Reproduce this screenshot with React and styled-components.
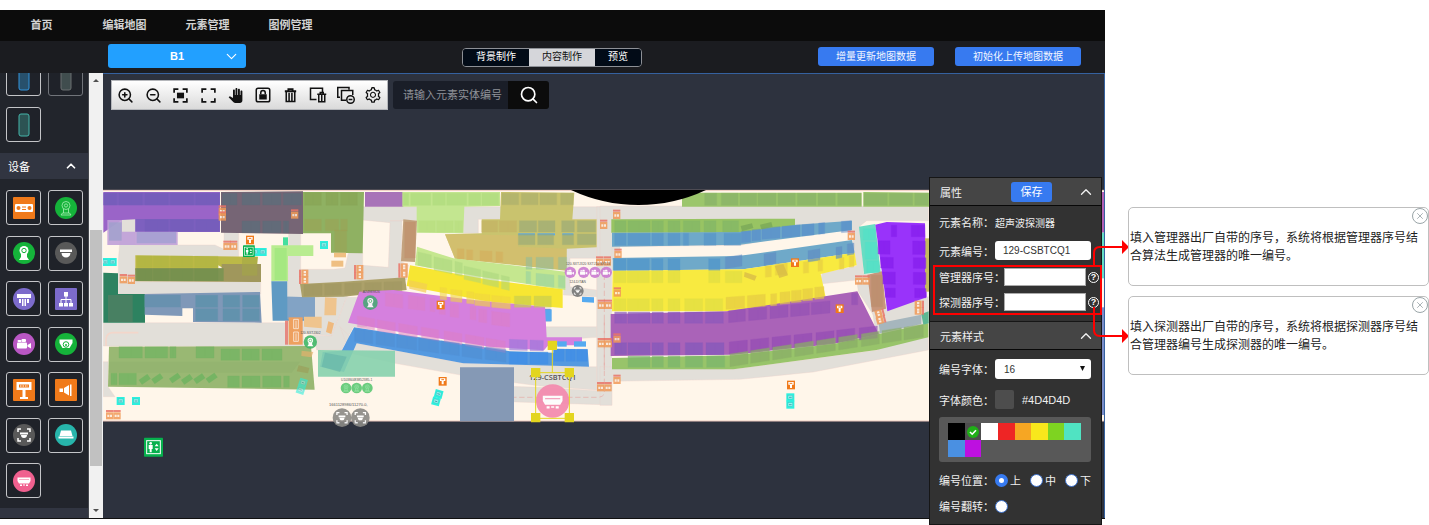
import React from 'react';
import styled, { createGlobalStyle } from 'styled-components';
import { ZoomIn, ZoomOut, Search, ChevronUp, ChevronDown, X } from 'lucide-react';
import { AiOutlineSetting } from 'react-icons/ai';
import { MdPanTool } from 'react-icons/md';

const Global = createGlobalStyle`
  * { box-sizing: border-box; }
  body { margin: 0; background: #fff; font-family: "Liberation Sans", "Noto Sans CJK SC", sans-serif; }
  button, input, select { font-family: inherit; margin: 0; }
  button { cursor: pointer; border: 0; padding: 0; }
`;

const Page = styled.div`
  display: flex;
  height: 100vh;
  padding: 10px 0 6px;
`;
const Workbench = styled.main`
  position: relative;
  flex: 1;
  min-width: 0;
  display: flex;
  flex-direction: column;
  background: #22252c;
  border-bottom: 1px solid #111;
`;
const Nav = styled.nav`
  display: flex;
  flex: none;
  height: 31px;
  background: #0c0c0c;
`;
const NavLink = styled.a`
  width: 83px;
  line-height: 30px;
  text-align: center;
  font-size: 11px;
  font-weight: 700;
  color: #d2d2d2;
  text-decoration: none;
`;
const SubBar = styled.div`
  display: grid;
  grid-template-columns: 1fr auto 1fr;
  align-items: center;
  flex: none;
  height: 32px;
  padding: 0 24px 0 108px;
  background: #1b1c20;
`;
const FloorPicker = styled.label`
  position: relative;
  width: 138px;
  margin-bottom: 2px;
  color: #fff;
  svg { position: absolute; right: 6px; top: 4px; pointer-events: none; }
`;
const FloorSelect = styled.select`
  appearance: none;
  display: block;
  width: 100%;
  height: 24px;
  border: 0;
  border-radius: 3px;
  background: #22a0ff;
  color: #fff;
  font-size: 11px;
  font-weight: 700;
  text-align-last: center;
`;
const Segments = styled.div`
  display: flex;
  height: 19px;
  margin-left: -85px;
  border: 1px solid #8d9096;
  border-radius: 4px;
  overflow: hidden;
`;
const Segment = styled.button`
  padding: 0 13px;
  font-size: 10px;
  line-height: 16px;
  background: ${p => (p.$active ? '#d5d6da' : '#020b17')};
  color: ${p => (p.$active ? '#111' : '#fff')};
`;
const Actions = styled.div`
  display: flex;
  justify-content: flex-end;
  gap: 21px;
  padding-bottom: 1px;
`;
const ActionButton = styled.button`
  height: 19px;
  padding: 0 18px;
  border-radius: 3px;
  background: #377af0;
  color: #f2f6ff;
  font-size: 10px;
  line-height: 18px;
  white-space: nowrap;
`;
const Body = styled.div`
  flex: 1;
  min-height: 0;
  display: flex;
`;
const Sidebar = styled.aside`
  width: 88px;
  overflow: hidden;
`;
const TileGrid = styled.div`
  display: grid;
  grid-template-columns: 35px 35px;
  grid-auto-rows: 35px;
  gap: 11px 7px;
  padding: 0 5px 0 6px;
  margin: -12px 0 11px;
`;
const DeviceGrid = styled(TileGrid)`
  row-gap: 0;
  height: 308px;
  align-content: space-between;
  margin: 11px 0 10px;
`;
const Tile = styled.button`
  display: grid;
  place-items: center;
  border: 1px solid ${p => (p.$dim ? '#71747a' : '#c4c5c8')};
  border-radius: 3px;
  background: #1f2229;
`;
const GroupHeader = styled.button`
  display: flex;
  align-items: center;
  justify-content: space-between;
  width: 100%;
  height: 26px;
  padding: 0 10px 0 8px;
  background: #313541;
  color: #fff;
  font-size: 11px;
`;
const Scrollbar = styled.div`
  width: 15px;
  display: flex;
  flex-direction: column;
  align-items: center;
  background: #f1f1f1;
  border-left: 1px solid #44474d;
`;
const ScrollArrow = styled.i`
  margin: 6px 0;
  border: 3px solid transparent;
  border-${p => (p.$up ? 'bottom' : 'top')}-color: #505050;
  border-${p => (p.$up ? 'top' : 'bottom')}-width: 0;
`;
const Track = styled.div`
  flex: 1;
  width: 12px;
  padding-top: 142px;
  padding-bottom: 37px;
`;
const Thumb = styled.div`
  height: 100%;
  background: #c1c1c1;
`;
const Canvas = styled.section`
  position: relative;
  flex: 1;
  min-width: 0;
  overflow: hidden;
  background: #2d323e;
  border: solid #35619f;
  border-width: 1px 1px 0 0;
`;
const MapSvg = styled.svg`
  display: block;
  width: 100%;
  height: 100%;
`;
const CanvasTools = styled.div`
  position: absolute;
  top: 6px;
  left: 8px;
  display: flex;
  align-items: center;
  gap: 5px;
`;
const Toolbar = styled.div`
  display: flex;
  width: 277px;
  height: 30px;
  border: 1px solid #b5b7bb;
  background: linear-gradient(#fff, #dadada);
`;
const ToolButton = styled.button`
  flex: 1;
  display: grid;
  place-items: center;
  background: none;
  color: #111;
`;
const SearchBox = styled.form`
  display: flex;
  height: 28px;
  border-radius: 3px;
  overflow: hidden;
`;
const SearchInput = styled.input`
  width: 115px;
  border: 0;
  padding: 0 0 0 10px;
  background: #1a1e28;
  color: #fff;
  font-size: 11px;
  &::placeholder { color: #8f9298; }
`;
const SearchButton = styled.button`
  width: 41px;
  display: grid;
  place-items: center;
  background: #0c0c0c;
  color: #fff;
`;
const Panel = styled.form`
  position: absolute;
  top: 167px;
  right: 3px;
  width: 173px;
  border: 1px solid #161616;
  background: #323232;
  color: #f0f0f0;
  font-size: 11px;
`;
const PanelHeader = styled.header`
  display: flex;
  align-items: center;
  justify-content: space-between;
  height: ${p => (p.$divided ? 29 : 28)}px;
  padding: 0 6px 0 10px;
  background: #454545;
  border-bottom: 1px solid #080808;
  border-top: ${p => (p.$divided ? '1px solid #161616' : '0')};
`;
const SaveButton = styled.button`
  width: 41px;
  height: 20px;
  margin-left: 24px;
  border-radius: 3px;
  background: #377af0;
  color: #fff;
  font-size: 11px;
  line-height: 18px;
`;
const Fields = styled.div`
  padding: 6px 0;
`;
const StyleFields = styled.div`
  display: flex;
  flex-direction: column;
  gap: 11px;
  padding: 9px 10px 10px 9px;
`;
const Row = styled.div`
  display: flex;
  align-items: center;
  height: ${p => p.$h || 20}px;
  padding: ${p => (p.$inset ? '0 10px 0 9px' : '0')};
  margin-bottom: ${p => p.$after || 0}px;
`;
const Label = styled.label`
  flex: none;
  width: ${p => (p.$wide ? 65 : 56)}px;
  white-space: nowrap;
`;
const Value = styled.output`
  padding-left: ${p => p.$gap || 0}px;
  font-size: ${p => (p.$gap ? 11 : 10)}px;
`;
const CodeInput = styled.input`
  flex: 1;
  min-width: 0;
  height: 19px;
  border: 0;
  border-radius: 3px;
  padding: 0 8px;
  background: #fff;
  color: #333;
  font-size: 10px;
`;
const Highlight = styled.div`
  height: 50px;
  margin: 0 -1px 0 3px;
  padding: 1px 1px 2px 4px;
  border: 2px solid #f00;
`;
const SerialInput = styled.input`
  flex: 1;
  min-width: 0;
  height: 18px;
  border: 1px solid #aaa;
  padding: 0 4px;
  background: #fff;
  font-size: 10px;
`;
const Help = styled.button`
  flex: none;
  width: 11px;
  height: 11px;
  margin-left: 2px;
  border: 1px solid #fff;
  border-radius: 50%;
  background: none;
  color: #fff;
  font-size: 9px;
  font-weight: 700;
  line-height: 9px;
`;
const SizePicker = styled.div`
  position: relative;
  flex: 1;
  svg { position: absolute; right: 6px; top: 7px; pointer-events: none; }
`;
const SizeSelect = styled.select`
  appearance: none;
  display: block;
  width: 100%;
  height: 20px;
  border: 0;
  border-radius: 3px;
  padding: 0 9px;
  background: #fff;
  color: #333;
  font-size: 10px;
`;
const ColorChip = styled.span`
  width: 19px;
  height: 19px;
  border-radius: 2px;
  background: #4d4d4d;
`;
const Palette = styled.div`
  display: grid;
  grid-template-columns: repeat(8, 1fr);
  grid-auto-rows: 17px;
  margin-top: -3px;
  padding: 6px 10px 5px 9px;
  border-radius: 3px;
  background: #585858;
`;
const Swatch = styled.button`
  display: grid;
  place-items: center;
  background: ${p => p.$color};
`;
const Choice = styled.label`
  display: flex;
  align-items: center;
  gap: 2px;
  width: 35px;
  flex: none;
`;
const Radio = styled.input`
  appearance: none;
  width: 13px;
  height: 13px;
  border-radius: 50%;
  border: 1px solid #3b6fc9;
  background: #fff;
  &:checked { background: #fff; border: 4px solid #377af0; }
`;
const Arrows = styled.svg`
  position: absolute;
  top: 62px;
  left: 160px;
  pointer-events: none;
`;
const Notes = styled.aside`
  flex: none;
  width: 324px;
  display: flex;
  flex-direction: column;
  gap: 10px;
  padding: 197px 0 0 23px;
`;
const Note = styled.article`
  position: relative;
  height: 79px;
  padding: 21px 1px 0;
  border: 1px solid #bfbfbf;
  border-radius: 5px;
  color: #222;
  font-size: 12px;
  line-height: 18px;
  p { margin: 0; }
`;
const CloseButton = styled.button`
  position: absolute;
  top: 0;
  right: 0;
  width: 16px;
  height: 16px;
  display: grid;
  place-items: center;
  border: 1px solid #9aa5a8;
  border-radius: 50%;
  background: #fff;
  color: #9aa5a8;
`;

/* ---------- toolbar drawings ---------- */
const Line = ({ children, w = 2, size = 18 }) => (
  <svg width={size} height={size} viewBox="0 0 24 24" fill="none" stroke="currentColor" strokeWidth={w}>{children}</svg>
);
const corners = 'M3 8V3h6M15 3h6v5M21 16v5h-6M9 21H3v-5';
const tools = [
  ['放大', <ZoomIn size={17} strokeWidth={2.2} />],
  ['缩小', <ZoomOut size={17} strokeWidth={2.2} />],
  ['适应', <Line w={2.4} size={17}><path d={corners} /><path d="M7 8h10v8H7z" fill="currentColor" stroke="none" /></Line>],
  ['全屏', <Line w={2.4} size={17}><path d={corners} /></Line>],
  ['拖动', <MdPanTool size={15} />],
  ['锁定', <Line><rect x="3" y="3" width="18" height="18" rx="2.5" /><path d="M7 11h10v7H7z" fill="currentColor" stroke="none" /><path d="M9 11V9a3 3 0 0 1 6 0v2" /></Line>],
  ['删除', <Line size={17}><path d="M4 6h16M9 5V3h6v2" strokeWidth="2.6" /><path d="M6 7v13.500h12V7M10 8v12M14 8v12" strokeWidth="2.200" /></Line>],
  ['删除区域', <Line><path d="M10 18H2V3h16v5" /><path d="M11 11h12M15 10V8.500h4V10" /><path d="M13 12v9h8v-9M17 12v9" /></Line>],
  ['移除图层', <Line><path d="M4 15H1V2h15v3" /><path d="M12 19H6V6h15v6" /><circle cx="18" cy="18" r="5" /><path d="M15.500 18h5" /></Line>],
  ['设置', <AiOutlineSetting size={18} />],
];

/* ---------- device tile drawings (22 x 22) ---------- */
const Glyph = ({ kind }) => {
  const W = '#fff';
  switch (kind) {
    case 'module': return <g fill={W}><rect x="2" y="7" width="18" height="8" rx="1" /><g fill="#f07a1a"><circle cx="5.500" cy="11" r="2" /><circle cx="16.500" cy="11" r="2" /><path d="M9 9.500h4v1H9zM9 12h4v1H9z" /></g></g>;
    case 'camLine': return <g fill="none" stroke="#a8f0b5" strokeWidth=".8"><circle cx="11" cy="8.500" r="4" /><circle cx="11" cy="8.500" r="1.600" /><path d="M8.500 12v4M13.500 12v4M6 18h10l-1.500-2h-7z" /></g>;
    case 'cam': return <g fill={W}><circle cx="11" cy="8.500" r="4.500" /><path d="M8 12h6v3l2 3H6l2-3z" /><circle cx="11" cy="8.500" r="2.200" fill="none" stroke="#15b33a" strokeWidth="1" /></g>;
    case 'dome': return <path fill={W} d="M5 7.500h12v2.500H5zM6.500 11h9a4.500 4.500 0 0 1-9 0z" />;
    case 'shower': return <path fill={W} d="M4 6h14v4H4zM6 11h2v4H6zM9 11h1.500v7H9zM11.500 11H13v7h-1.500zM14 11h2v4h-2z" />;
    case 'tree': return <g fill={W}><path d="M9 4h4v4.500H9zM4 15h4v3.500H4zM9 15h4v3.500H9zM14 15h4v3.500h-4z" /><path d="M11 8v7M6 15v-3.500h10V15" stroke={W} fill="none" /></g>;
    case 'video': return <g fill={W}><rect x="4" y="9.500" width="10" height="6" rx="1" /><path d="M14.500 12l3.500-2v5.500l-3.500-2z" /><rect x="4.500" y="7" width="4" height="2" rx="1" /><rect x="8.500" y="6" width="4.500" height="3" rx="1" /></g>;
    case 'speed': return <g fill={W}><path d="M4.500 6.500h13V10l-3 5h-7l-3-5z" /><circle cx="11" cy="11.500" r="2.800" fill="none" stroke="#15b33a" /><circle cx="11" cy="12" r="1" fill="#15b33a" /></g>;
    case 'sign': return <g fill={W}><path d="M3.500 3h15v8h-15z" /><path d="M9.500 11h3v7h-3zM7 18h8v2H7z" /><path d="M6 5.500h10v3H6z" fill="#f07a1a" /><path d="M7 7h8" stroke={W} strokeDasharray="1.500 1" /></g>;
    case 'horn': return <path fill={W} d="M4.500 9.500h3.500v3.500H4.500zM9 9l5-3v10.500L9 13.500zM15 5.500h1.500V17H15z" />;
    case 'detect': return <g><path d="M5 8V5h3M14 5h3v3M17 14v3h-3M8 17H5v-3" stroke={W} strokeWidth="1.500" fill="none" /><path fill={W} d="M7 8.500h8v2H7zM8 11h6a3 3 0 0 1-6 0z" /></g>;
    case 'bar': return <path fill={W} d="M6 6.500h10l1.500 5.500h-13zM3.500 12.500h15v2h-15z" />;
    default: return <g><path fill={W} d="M4.500 7.500h13V11l-1.500 2.500H6L4.500 11zM7 14.500h2V16H7zM10 14.500h2v1h-2zM13 14.500h2V16h-2z" /><path d="M6 9.500h10" stroke="#f0608f" strokeWidth=".5" /></g>;
  }
};
const DeviceIcon = ({ kind, color, square }) => (
  <svg width="22" height="22" viewBox="0 0 22 22">
    {square ? <rect width="22" height="22" rx="1" fill={color} /> : <circle cx="11" cy="11" r="11" fill={color} />}
    <Glyph kind={kind} />
  </svg>
);
const Slot = ({ color, fill }) => (
  <svg width="22" height="24" viewBox="0 0 22 24"><rect x="6" y="1" width="10" height="22" rx="2" fill={fill} stroke={color} /></svg>
);
const devices = [
  ['module', '#f07a1a', 1], ['camLine', '#15b33a'], ['cam', '#15b33a'], ['dome', '#595959'],
  ['shower', '#7c6bcb'], ['tree', '#7c6bcb', 1], ['video', '#b957c4'], ['speed', '#15b33a'],
  ['sign', '#f07a1a', 1], ['horn', '#f07a1a', 1], ['detect', '#595959'], ['bar', '#27b5ab'], ['ultra', '#f0608f'],
];

/* ---------- map: three plates side by side, each [fill, points, opacity] ---------- */
const ROAD = '#e2dfd9';
const west = [
  [ROAD, '65,116 106,116 106,195 345,195 372,208 372,155 416,155 416,230 106,230 106,305 482,305 482,342 135,342 55,342 55,240'],
  [ROAD, '10,428 562,428 562,410 566,160 602,160 602,268 700,268 735,264 745,218 788,218 788,300 740,352 695,468 610,460 610,500 10,498'],
  [ROAD, '740,352 830,352 800,440 760,440 725,510 650,510 640,465 695,468'],
  [ROAD, '10,545 24,545 24,620 45,650 10,650'],
  ['#9a64c8', '10,36 360,36 360,156 106,156 106,118 65,120 10,158'],
  ['#755fbd', '10,38 360,38 360,76 10,76', .8],
  ['#755fbd', '106,117 360,117 360,155 106,155', .8],
  ['#c0a0d8', '22,120 66,120 66,155 233,155 233,195 22,195', .9],
  ['#9aa0cb', '27,127 65,127 65,182 27,182', .7],
  ['#9c9ed0', '110,156 228,156 228,190 110,190', .7],
  ['#766575', '363,36 609,34 609,162 363,158'],
  ['#8fb162', '609,36 792,36 788,220 693,218 693,160 609,160'],
  ['#a873b8', '795,36 910,36 910,80 795,80'],
  ['#bcb947', '106,226 474,230 470,262 365,262 355,256 355,270 106,270'],
  ['#a0975c', '106,265 365,265 365,252 483,252 483,306 106,304'],
  ['#769350', '106,265 371,265 371,303 106,303', .8],
  ['#a3a746', '426,231 472,231 472,287 426,287', .6],
  ['#2d8260', '10,278 54,280 54,342 135,342 135,428 10,428'],
  ['#4f7f63', '24,345 98,345 98,426 24,426', .8],
  ['#7f98b8', '134,342 480,336 485,428 279,426 279,385 247,385 247,408 134,404'],
  ['#6390ac', '134,345 242,345 242,382 134,382', .8],
  ['#b9ec90', '514,196 640,196 640,228 564,228 564,304 514,304'],
  ['#98e678', '524,204 560,204 560,300 524,300', .6],
  ['#45df9e', '549,172 564,172 564,196 549,196'],
  ['#5f9ac3', '514,304 562,304 562,350 645,352 645,422 518,422'],
  ['#91a7c6', '562,350 645,352 645,418 562,418', .7],
  ['#aca16a', '600,312 730,305 915,292 920,330 730,350 606,352'],
  ['#99b873', '27,500 633,498 644,629 24,620'],
  ['#8cab69', '27,545 600,545 575,578 27,578', .35],
  ['#e77269', '555,422 564,422 564,494 555,494', .8],
  ['#eea05f', '566,412 608,412 608,494 566,494'],
  ['#efc48d', '675,352 710,354 708,406 673,406'],
  ['#efc48d', '612,410 665,410 665,445 612,440'],
  ['#efb97d', '685,424 702,430 694,462 678,456'],
  ['#efbf82', '702,218 738,218 738,232 702,232'],
  ['#efbf82', '694,242 730,242 730,260 694,260'],
  ['#9b9b57', '596,556 628,564 624,580 590,574', .6],
  ['#e2b06c', '605,512 640,516 634,532 604,528', .7],
];
const mid = [
  [ROAD, '66,80 840,80 840,118 415,118 415,160 370,160 370,122 150,122 186,122 184,245 205,255 200,300 70,300 68,256 145,262 150,128 66,120'],
  [ROAD, '560,195 770,195 770,235 690,235 690,320 770,330 770,350 670,345 680,195'],
  [ROAD, '540,440 770,440 770,472 728,475 618,475'],
  [ROAD, '770,80 840,80 840,230 815,240 815,675 500,665 480,618 600,622 770,632'],
  [ROAD, '0,440 50,490 370,550 745,560 770,560 770,630 600,618 400,592 165,550 30,520'],
  ['#c3e690', '187,36 480,36 480,78 373,80 370,160 230,158 230,80 187,80'],
  ['#c9c36e', '483,36 703,38 697,118 770,118 770,202 680,206 680,272 345,236 315,163 425,160 425,118 480,118'],
  ['#d8bd6e', '315,163 535,166 535,200 680,206 676,268 345,236', .6],
  ['#c3a27e', '190,118 231,122 225,246 183,244'],
  ['#c5e78f', '231,200 340,235 676,275 676,330 420,290 225,256'],
  ['#f7e632', '210,256 450,300 668,328 668,384 440,364 200,318'],
  ['#f2cd52', '206,300 262,312 258,338 208,326', .7],
  ['#8e80d8', '520,386 632,386 632,424 520,424'],
  ['#58a9ee', '615,388 635,388 635,424 615,424'],
  ['#d580de', '58,335 160,330 400,360 615,380 620,472 726,472 726,496 625,496 612,511 450,500 200,460 24,428'],
  ['#5499e0', '42,442 510,514 640,518 640,506 743,508 747,560 370,550 50,490 12,576 -60,560 -52,516 5,512'],
  ['#86d2ad', '-66,510 165,512 165,590 -66,590', .9],
  ['#64b3a8', '-45,518 20,530 0,576 -55,560', .6],
  ['#8599b5', '360,562 522,562 522,724 360,724'],
  ['#55aaf0', '726,350 762,352 762,368 726,366'],
  ['#55aaf0', '535,160 585,160 585,166 535,166'],
  ['#55aaf0', '593,160 645,160 645,166 593,166'],
  ['#55aaf0', '667,160 700,160 700,166 667,166'],
  ['#55aaf0', '652,484 680,484 680,500 652,500'],
  ['#55aaf0', '702,484 738,484 738,500 702,500'],
];
const east = [
  [ROAD, '0,78 985,78 985,122 800,122 780,138 790,280 806,284 820,396 836,430 775,335 770,300 660,312 666,280 770,258 755,150 585,165 420,196 36,200 36,236 0,236'],
  [ROAD, '815,380 985,350 985,510 640,576 420,598 36,604 36,676 0,676 0,560 400,568 835,510'],
  ['#9cc66c', '246,38 785,38 785,80 246,80'],
  ['#9cc66c', '790,36 990,38 990,80 790,80'],
  ['#98c463', '34,118 585,116 585,140 420,158 34,158'],
  ['#6fa9c9', '36,158 420,156 590,134 756,122 756,150 420,194 36,200'],
  ['#6fa9c9', '38,234 415,228 756,180 764,218 430,268 38,272'],
  ['#f8ea40', '38,272 430,268 764,218 770,256 662,282 678,356 380,394 36,394'],
  ['#aa63b8', '32,402 380,394 772,334 836,462 700,492 400,524 32,528'],
  ['#98c46a', '36,534 400,526 700,492 985,430 985,472 830,510 400,568 36,568'],
  ['#a6b6bd', '836,430 964,404 964,432 840,460'],
  ['#5eb793', '964,402 986,394 986,430 970,434'],
  ['#68ddc3', '777,140 826,132 842,276 792,282'],
  ['#c8977c', '802,284 846,274 858,386 816,396'],
  ['#9933fa', '826,134 860,126 975,130 980,352 862,394'],
  ['#c4ba60', '975,175 990,175 990,335 975,335'],
  ['#b25fb5', '1500,36 1516,36 1516,158 1500,158'],
  ['#65dfc5', '1500,158 1516,158 1516,295 1500,295'],
  ['#7a8dc9', '1500,382 1516,382 1516,705 1500,705'],
];

/* parking bays: [fill, opacity, top, height, slope, [[x, width], ...]] */
const bays = {
  west: [
    ['#6659b5', .35, 40, 35, 0, [[12, 38], [57, 70], [135, 70], [211, 70], [287, 70]]],
    ['#6659b5', .35, 119, 35, 0, [[135, 70], [211, 70], [287, 70]]],
    ['#55707c', .7, 40, 35, 0, [[367, 44], [426, 54], [488, 55], [550, 54]]],
    ['#55707c', .7, 123, 35, 0, [[426, 54], [488, 55], [550, 16]]],
    ['#849c4c', .5, 38, 38, 0, [[614, 50], [678, 36], [722, 50]]],
    ['#a39b4e', .45, 118, 34, 0, [[614, 50], [676, 40], [722, 20]]],
    ['#a39b4e', .45, 150, 66, 0, [[704, 36]]],
    ['#a5b33e', .4, 228, 34, 0, [[112, 44], [160, 46], [212, 66], [284, 70]]],
    ['#6a8e48', .4, 266, 36, 0, [[112, 44], [160, 46], [212, 66], [284, 70]]],
    ['#5390a8', .75, 346, 36, 0, [[287, 66], [369, 50], [428, 50]]],
    ['#5390a8', .75, 386, 36, 0, [[287, 66], [369, 50], [428, 50]]],
    ['#9a925c', .5, 314, 34, -2, [[612, 54], [674, 50], [734, 50], [794, 50], [852, 54]]],
    ['#63b35c', .65, 500, 34, 0, [[57, 70], [135, 68], [210, 18], [288, 54]]],
    ['#63b35c', .65, 507, 34, 0, [[363, 56], [426, 52], [486, 60]]],
    ['#63b35c', .65, 580, 34, 0, [[33, 18], [57, 52]]],
    ['#63b35c', .65, 588, 34, 0, [[383, 35], [426, 54], [488, 55], [551, 17]]],
  ],
  mid: [
    ['#a2d470', .5, 40, 36, 0, [[190, 16], [212, 60], [278, 38], [320, 60], [386, 36], [426, 50]]],
    ['#a1a86c', .6, 40, 34, 0, [[486, 50], [544, 50], [600, 50], [662, 38]]],
    ['#b1d872', .5, 122, 34, 0, [[236, 50], [290, 50], [344, 24]]],
    ['#c2ac60', .6, 122, 34, 0, [[425, 48], [478, 52]]],
    ['#98aa78', .75, 122, 34, 0, [[538, 52], [595, 50], [665, 38], [712, 55]]],
    ['#98aa78', .75, 162, 32, 0, [[535, 50], [593, 48], [667, 34], [712, 56]]],
    ['#d4ab58', .6, 206, 30, 3, [[352, 20], [380, 18], [420, 36], [468, 20]]],
    ['#88bda2', .6, 232, 36, 0, [[558, 18], [588, 52], [655, 25]]],
    ['#a8d47c', .6, 216, 40, 14, [[234, 40], [282, 54], [345, 22], [372, 50], [428, 48], [484, 24]]],
    ['#9cd4a0', .8, 274, 36, 6, [[558, 14], [588, 54], [655, 20]]],
    ['#f1d640', .7, 322, 36, 6, [[300, 20], [332, 34], [380, 22], [404, 46], [455, 56]]],
    ['#c8ce50', .8, 348, 34, 0, [[523, 50], [582, 52]]],
    ['#dd7fc4', .6, 338, 40, 8, [[136, 52], [205, 50], [270, 14], [298, 18], [330, 26], [390, 18], [416, 24], [455, 54]]],
    ['#dd7fc4', .6, 408, 34, 11, [[52, 52], [112, 54], [176, 56], [244, 52], [312, 54], [376, 56], [438, 58]]],
    ['#9c78dc', .8, 478, 32, 2, [[508, 54], [570, 40]]],
    ['#4f8cd0', .6, 446, 38, 9, [[44, 54], [108, 56], [170, 60], [236, 60], [304, 54], [366, 60], [436, 62]]],
    ['#3d8ce8', .8, 516, 36, 0, [[508, 54], [570, 54]]],
    ['#3d8ce8', .8, 508, 36, 0, [[642, 30], [678, 28], [710, 32]]],
    ['#c08560', .5, 126, 108, 0, [[194, 32]]],
  ],
  east: [
    ['#86b068', .75, 40, 36, 0, [[314, 36], [364, 50], [420, 50], [474, 54], [534, 52], [592, 56], [654, 52], [713, 70], [792, 70], [868, 70], [944, 40]]],
    ['#7eb468', .7, 122, 34, 0, [[44, 34], [84, 66], [156, 34], [204, 36], [250, 50], [312, 36], [368, 48]]],
    ['#5191c8', .7, 160, 36, 0, [[44, 34], [84, 66], [156, 34], [204, 36], [250, 16], [312, 36], [372, 50]]],
    ['#4f84cc', .6, 154, 34, -5, [[424, 28], [456, 26], [486, 54], [546, 54], [606, 36], [656, 18], [724, 30]]],
    ['#4b93cc', .75, 236, 35, 0, [[42, 36], [82, 66], [155, 34], [204, 36], [326, 34]]],
    ['#5f8dc4', .8, 232, 34, -10, [[376, 50], [492, 36], [624, 36], [708, 18], [742, 20]]],
    ['#dcdc44', .7, 274, 34, 0, [[42, 36], [82, 66], [155, 34], [204, 36], [326, 34], [376, 50]]],
    ['#e5ca43', .7, 258, 34, -6, [[496, 18], [526, 36], [610, 16], [654, 14], [718, 14], [748, 14]]],
    ['#dcdc44', .7, 356, 36, 0, [[42, 36], [82, 66], [155, 34], [204, 36], [254, 54], [316, 52]]],
    ['#e5ca43', .8, 352, 36, -5, [[378, 56], [442, 54], [512, 18], [540, 30], [574, 30], [608, 30], [644, 28]]],
    ['#8a58bc', .8, 396, 34, 0, [[44, 36], [84, 66], [156, 34], [204, 36], [254, 54], [316, 54]]],
    ['#9350b5', .8, 392, 36, -6, [[386, 50], [446, 54], [510, 54], [572, 56], [634, 56]]],
    ['#9350b5', .8, 340, 34, 0, [[755, 18]]],
    ['#8058bc', .8, 488, 36, 0, [[44, 36], [84, 66], [156, 34], [204, 36], [256, 52], [318, 54]]],
    ['#934ab5', .8, 486, 36, -7, [[388, 54], [452, 54], [516, 56], [582, 54], [648, 54], [710, 54], [778, 54]]],
    ['#79b56c', .8, 528, 34, 0, [[84, 66], [156, 34], [204, 36], [256, 52], [320, 54]]],
    ['#8aae66', .85, 522, 38, -10, [[390, 54], [452, 56], [518, 56], [584, 56], [650, 56], [716, 56], [784, 54], [846, 58], [912, 58]]],
    ['#861fee', .9, 136, 34, 0, [[874, 16], [934, 40]]],
    ['#861fee', .9, 182, 40, 1, [[834, 36], [938, 38]]],
    ['#861fee', .9, 232, 32, 1, [[842, 38], [940, 38]]],
    ['#861fee', .9, 276, 36, 1, [[848, 38], [940, 38]]],
    ['#861fee', .9, 324, 28, 1, [[856, 30], [944, 34]]],
    ['#4fe2c8', .8, 146, 34, 0, [[790, 36]]],
    ['#4fe2c8', .8, 186, 52, 0, [[796, 34]]],
    ['#4fe2c8', .8, 242, 36, 0, [[800, 36]]],
    ['#b58a66', .6, 286, 94, 0, [[814, 34]]],
  ],
};
const tiltedBays = [[116, 590], [154, 588], [207, 586], [243, 590], [280, 588], [317, 586]];

const Zones = ({ items }) => items.map(([fill, points, o = 1], i) => <polygon key={i} fill={fill} points={points} opacity={o} />);
const Bays = ({ rows }) => rows.map(([fill, o, y, h, slope, cells], i) => (
  <g key={i} fill={fill} opacity={o * 0.85} stroke={fill} strokeWidth="1">
    {cells.map(([x, w], k) => {
      const top = y + slope * k;
      const drop = slope * w / 64;
      return <path key={k} d={`M${x} ${top}L${x + w} ${top + drop}V${top + drop + h}L${x} ${top + h}ZM${x + w / 2} ${top + 4}v${h - 8}`} />;
    })}
  </g>
));
const Gate = ({ x, y, r = 0 }) => (
  <g transform={`translate(${x} ${y}) rotate(${r})`} opacity=".85">
    <rect x="-11" y="-14" width="22" height="6" fill="#ea7568" />
    <rect x="-11" y="-7" width="22" height="21" fill="#f19a58" />
    <path d="M-7 0h6v7h-6zM1 0h6v7H1z" fill="#fff" opacity=".8" />
  </g>
);
const SignPost = ({ x, y }) => (
  <g transform={`translate(${x} ${y})`}>
    <rect x="-12" y="-13" width="24" height="26" fill="#f07a1a" />
    <path d="M-8-9H8v8H3V9h-6V-1h-5z" fill="#fff" />
    <path d="M-4-5h8" stroke="#f07a1a" strokeWidth="3" />
  </g>
);
const CyanUnit = ({ x, y, r = 0 }) => (
  <g transform={`translate(${x} ${y}) rotate(${r})`}>
    <rect x="-12" y="-12" width="24" height="24" fill="#2df0de" />
    <rect x="-7" y="-6" width="14" height="11" fill="#8ff7ee" stroke="#37aeb4" />
    <path d="M-4 0h8" stroke="#2c7c96" strokeWidth="2" />
  </g>
);
const Pin = ({ x, y, r, color, kind, o = 0.9 }) => (
  <g transform={`translate(${x} ${y}) scale(${r / 11}) translate(-11 -11)`} opacity={o}>
    <circle cx="11" cy="11" r="11" fill={color} /><Glyph kind={kind} />
  </g>
);
const Lift = ({ x, y, s }) => (
  <g transform={`translate(${x} ${y}) scale(${s})`}>
    <rect width="57" height="57" rx="2" fill="#07b04d" />
    <rect x="8" y="9" width="41" height="39" fill="none" stroke="#fff" strokeWidth="3" />
    <circle cx="20" cy="17" r="4" fill="#fff" />
    <path d="M14 22h12v12h-3v10h-6V34h-3zM32 26l6-8 6 8zM32 32h12l-6 8z" fill="#fff" />
  </g>
);
const gates = [
  [367, 90], [367, 108], [584, 102], [381, 196], [401, 196], [70, 296], [94, 298],
  [611, 280, -90], [611, 301, -90], [776, 266, -90], [776, 287, -90],
  [29, 704], [51, 704], [1511, 133], [1550, 103], [1554, 220], [1499, 243], [1522, 243],
  [1552, 336], [1504, 373], [1525, 373], [1551, 474], [1504, 488], [1525, 488], [1551, 598], [1502, 620], [1524, 620],
  [909, 261, -90], [909, 282, -90], [2254, 166], [2276, 300], [2298, 300], [2339, 400, 75], [2343, 420, 75], [2458, 373, 90], [2458, 393, 90],
];

const FloorMap = () => (
  <MapSvg viewBox="9 -318 3003 1332" preserveAspectRatio="xMinYMin slice" role="img" aria-label="B1 地图">
    <rect x="9" y="30" width="3003" height="693" fill="#fff6ea" />
    <path d="M9 31H3012M9 723H3012" stroke="#edc8bd" strokeWidth="3" />
    <g stroke="#eccfc7" strokeWidth="1"><Zones items={west.filter(z => z[0] === ROAD)} /></g>
    <g stroke="#eccfc7" strokeWidth="1" transform="translate(720)"><Zones items={mid.filter(z => z[0] === ROAD)} /></g>
    <g stroke="#eccfc7" strokeWidth="1" transform="translate(1500)"><Zones items={east.filter(z => z[0] === ROAD)} /></g>
    <path d="M18 498V478Q20 458 40 458H115" fill="none" stroke="#f3d6ca" strokeWidth="5" />
    <path d="M1513 260V640Q1510 652 1490 652H1225M1513 420V570" fill="none" stroke="#e5a9a4" strokeWidth="2" strokeDasharray="16 8" />
    <Zones items={west.filter(z => z[0] !== ROAD)} />
    <Bays rows={bays.west} />
    <g fill="#63b35c" opacity=".65">
      {tiltedBays.map(([x, y]) => <path key={x} d={`M${x} ${y + 10}L${x + 26} ${y - 8}L${x + 36} ${y + 6}L${x + 10} ${y + 24}Z`} />)}
    </g>
    <g transform="translate(720)"><Zones items={mid.filter(z => z[0] !== ROAD)} /><Bays rows={bays.mid} /></g>
    <g transform="translate(1500)"><Zones items={east.filter(z => z[0] !== ROAD)} /><Bays rows={bays.east} /></g>
    <g fill="#d8bb47" opacity=".8"><path d="M1934 276l36 12-6 14-32-12zM2024 258l26-6 14 34-26 8z" /></g>
    <g fill="#7aa957" opacity=".8"><path d="M1922 138l34-8 4 14-34 10zM1980 134l34-8 4 14-34 8z" /></g>
    <path d="M1413 30A478 478 0 0 0 1818 30Z" fill="#000" />
    {gates.map(([x, y, r], i) => <Gate key={i} x={x} y={y} r={r} />)}
    <g fill="none" stroke="#fff" strokeWidth="2"><path d="M581 418h14v28h-14zM581 456h14v28h-14zM588 422v22M588 460v22" /></g>
    {[[450, 180], [1022, 375], [1028, 604], [2085, 248], [2219, 386], [2073, 615]].map(([x, y]) => <SignPost key={x} x={x} y={y} />)}
    {[[16, 246], [38, 246], [465, 216], [488, 216], [672, 195], [62, 663], [108, 663], [1016, 642, 15], [1008, 664, 15], [2071, 652], [2071, 674]].map(([x, y, r], i) => <CyanUnit key={i} x={x} y={y} r={r} />)}
    <g opacity=".6"><CyanUnit x={609} y={608} r={18} /><CyanUnit x={602} y={630} r={18} /></g>
    <Lift x={429} y={196} s={0.62} />
    <Lift x={132} y={773} s={1} />
    <Pin x={631} y={486} r={20} color="#3fb767" kind="cam" />
    <Pin x={811} y={368} r={22} color="#4aa877" kind="cam" />
    {[738, 770, 802].map(x => <Pin key={x} x={x} y={624} r={16} color="#5bc873" kind="camLine" />)}
    {[726, 781].map(x => <Pin key={x} x={x} y={713} r={28} color="#8b8a86" kind="detect" />)}
    {[1411, 1451, 1485, 1519].map(x => <Pin key={x} x={x} y={277} r={17} color="#cc7bd2" kind="video" />)}
    <Pin x={1433} y={333} r={18} color="#777" kind="detect" />
    <g fill="#555" fontFamily='"Liberation Sans", sans-serif' textAnchor="middle">
      <text x="631" y="461" fontSize="10">120-SXTJ302</text>
      <text x="814" y="339" fontSize="10">A24989826</text>
      <text x="770" y="604" fontSize="10">U10384483852385-1</text>
      <text x="745" y="678" fontSize="12">1661128986/11270-0,</text>
      <text x="1464" y="255" fontSize="10">120-SXTJ320 SXTJ10 SXTJ3</text>
      <text x="1433" y="308" fontSize="10">124-DITAN</text>
      <text x="1358" y="599" fontSize="22" fontFamily='"Open Sans", sans-serif' fontWeight="600">129-CSBTCQ1</text>
    </g>
    <Pin x={1358} y={663} r={50} color="#f48aae" kind="ultra" o={0.92} />
    <g stroke="#e3d51f" strokeWidth="3" fill="none"><path d="M1307 578H1408V715H1307ZM1357 500V578" /></g>
    <path fill="#e3d51f" d="M1293 564h28v28h-28zM1394 564h28v28h-28zM1293 699h28v28h-28zM1394 699h28v28h-28zM1343 482h28v28h-28z" />
  </MapSvg>
);

const palette = ['#000', '#4d4d4d', '#fff', '#ee2525', '#f6a623', '#f8e71c', '#7ed321', '#50e3c2', '#4a90e2', '#bd10e0'];
const notes = [
  '填入管理器出厂自带的序号，系统将根据管理器序号结合算法生成管理器的唯一编号。',
  '填入探测器出厂自带的序号，系统将根据探测器序号结合管理器编号生成探测器的唯一编号。',
];

export default function App() {
  return (
    <Page>
      <Global />
      <Workbench>
        <Nav>
          {['首页', '编辑地图', '元素管理', '图例管理'].map(t => <NavLink key={t} href="#">{t}</NavLink>)}
        </Nav>
        <SubBar>
          <FloorPicker>
            <FloorSelect aria-label="楼层"><option>B1</option></FloorSelect>
            <ChevronDown size={17} strokeWidth={1.6} />
          </FloorPicker>
          <Segments>
            <Segment>背景制作</Segment>
            <Segment $active>内容制作</Segment>
            <Segment>预览</Segment>
          </Segments>
          <Actions>
            <ActionButton>增量更新地图数据</ActionButton>
            <ActionButton>初始化上传地图数据</ActionButton>
          </Actions>
        </SubBar>
        <Body>
          <Sidebar>
            <TileGrid>
              <Tile aria-label="蓝色车位"><Slot color="#3394dc" fill="#27506c" /></Tile>
              <Tile $dim aria-label="灰色车位"><Slot color="#6b6f70" fill="#404d4e" /></Tile>
              <Tile aria-label="绿色车位"><Slot color="#45b5aa" fill="#2c5353" /></Tile>
            </TileGrid>
            <GroupHeader>设备<ChevronUp size={14} strokeWidth={3} /></GroupHeader>
            <DeviceGrid>
              {devices.map(([kind, color, square]) => (
                <Tile key={kind} aria-label={kind}><DeviceIcon kind={kind} color={color} square={square} /></Tile>
              ))}
            </DeviceGrid>
            <GroupHeader aria-label="更多" />
          </Sidebar>
          <Scrollbar>
            <ScrollArrow $up />
            <Track><Thumb /></Track>
            <ScrollArrow />
          </Scrollbar>
          <Canvas>
            <FloorMap />
            <CanvasTools>
              <Toolbar>
                {tools.map(([name, icon]) => <ToolButton key={name} aria-label={name}>{icon}</ToolButton>)}
              </Toolbar>
              <SearchBox>
                <SearchInput aria-label="元素实体编号" placeholder="请输入元素实体编号" />
                <SearchButton type="button" aria-label="搜索"><Search size={20} strokeWidth={2} /></SearchButton>
              </SearchBox>
            </CanvasTools>
          </Canvas>
        </Body>
        <Panel>
          <PanelHeader>
            属性
            <SaveButton type="button">保存</SaveButton>
            <ChevronUp size={18} strokeWidth={1.8} />
          </PanelHeader>
          <Fields>
            <Row $inset $after={9}><Label as="span">元素名称：</Label><Value>超声波探测器</Value></Row>
            <Row $inset $h={19} $after={5}>
              <Label htmlFor="code">元素编号：</Label><CodeInput id="code" defaultValue="129-CSBTCQ1" />
            </Row>
            <Highlight>
              <Row $h={18} $after={7}>
                <Label $wide htmlFor="manager">管理器序号：</Label><SerialInput id="manager" /><Help type="button">?</Help>
              </Row>
              <Row $h={18}>
                <Label $wide htmlFor="probe">探测器序号：</Label><SerialInput id="probe" /><Help type="button">?</Help>
              </Row>
            </Highlight>
          </Fields>
          <PanelHeader $divided>元素样式<ChevronUp size={18} strokeWidth={1.8} /></PanelHeader>
          <StyleFields>
            <Row>
              <Label htmlFor="size">编号字体：</Label>
              <SizePicker>
                <SizeSelect id="size"><option>16</option></SizeSelect>
                <svg width="5" height="5" viewBox="0 0 6 6"><path d="M0 0h6L3 6z" fill="#111" /></svg>
              </SizePicker>
            </Row>
            <Row $h={19}><Label as="span">字体颜色：</Label><ColorChip /><Value $gap={8}>#4D4D4D</Value></Row>
            <Palette>
              {palette.map(c => (
                <Swatch key={c} type="button" $color={c} aria-label={c}>
                  {c === '#4d4d4d' && (
                    <svg width="12" height="12" viewBox="0 0 12 12">
                      <circle cx="6" cy="6" r="6" fill="#1fae17" /><path d="M3 6l2.200 2.200L9 4.200" stroke="#fff" strokeWidth="1.600" fill="none" />
                    </svg>
                  )}
                </Swatch>
              ))}
            </Palette>
            <Row $h={14}>
              <Label as="span">编号位置：</Label>
              {['上', '中', '下'].map((t, i) => (
                <Choice key={t}><Radio type="radio" name="pos" defaultChecked={i === 0} />{t}</Choice>
              ))}
            </Row>
            <Row $h={16}><Label htmlFor="flip">编号翻转：</Label><Radio type="radio" id="flip" /></Row>
          </StyleFields>
          <Arrows width="42" height="112" viewBox="0 0 42 112" fill="none" stroke="#f00" strokeWidth="2">
            <path d="M4 25V13Q4 7 10 7H34M4 67V90Q4 96 10 96H34" />
            <path d="M32 0l7 7-7 7zM32 89l7 7-7 7z" fill="#f00" stroke="none" />
          </Arrows>
        </Panel>
      </Workbench>
      <Notes>
        {notes.map(t => (
          <Note key={t}><p>{t}</p><CloseButton aria-label="关闭"><X size={10} strokeWidth={2} /></CloseButton></Note>
        ))}
      </Notes>
    </Page>
  );
}
